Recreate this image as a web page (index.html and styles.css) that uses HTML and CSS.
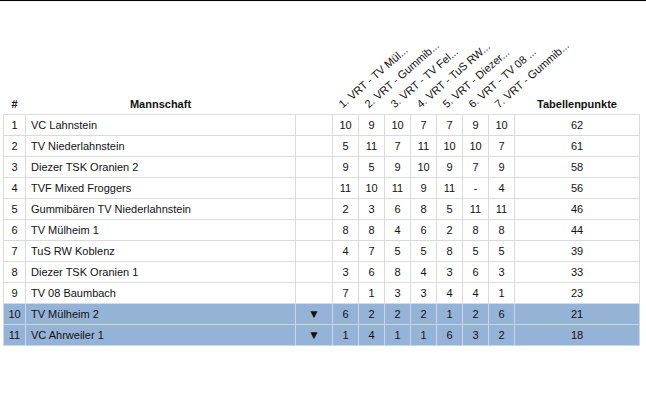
FILE: index.html
```html
<!DOCTYPE html>
<html lang="de">
<head>
<meta charset="utf-8">
<title>Tabelle</title>
<link rel="stylesheet" href="styles.css">
</head>
<body>
<div class="topbar"></div>
<div class="wrap">
<table class="standings">
  <colgroup>
    <col class="c-rank"><col class="c-team"><col class="c-trend">
    <col class="c-sc"><col class="c-sc"><col class="c-sc"><col class="c-sc"><col class="c-sc"><col class="c-sc"><col class="c-sc">
    <col class="c-pts">
  </colgroup>
  <thead>
    <tr>
      <th class="h-plain">#</th>
      <th class="h-plain">Mannschaft</th>
      <th class="h-plain"></th>
      <th class="h-rot"><span class="rot">1. VRT - TV Mül...</span></th>
      <th class="h-rot"><span class="rot">2. VRT - Gummib...</span></th>
      <th class="h-rot"><span class="rot">3. VRT - TV Fel...</span></th>
      <th class="h-rot"><span class="rot">4. VRT - TuS RW...</span></th>
      <th class="h-rot"><span class="rot">5. VRT - Diezer...</span></th>
      <th class="h-rot"><span class="rot">6. VRT - TV 08 ...</span></th>
      <th class="h-rot"><span class="rot">7. VRT - Gummib...</span></th>
      <th class="h-plain">Tabellenpunkte</th>
    </tr>
  </thead>
  <tbody>
    <tr><td class="num">1</td><td class="team">VC Lahnstein</td><td class="trend"></td><td>10</td><td>9</td><td>10</td><td>7</td><td>7</td><td>9</td><td>10</td><td>62</td></tr>
    <tr><td class="num">2</td><td class="team">TV Niederlahnstein</td><td class="trend"></td><td>5</td><td>11</td><td>7</td><td>11</td><td>10</td><td>10</td><td>7</td><td>61</td></tr>
    <tr><td class="num">3</td><td class="team">Diezer TSK Oranien 2</td><td class="trend"></td><td>9</td><td>5</td><td>9</td><td>10</td><td>9</td><td>7</td><td>9</td><td>58</td></tr>
    <tr><td class="num">4</td><td class="team">TVF Mixed Froggers</td><td class="trend"></td><td>11</td><td>10</td><td>11</td><td>9</td><td>11</td><td>-</td><td>4</td><td>56</td></tr>
    <tr><td class="num">5</td><td class="team">Gummibären TV Niederlahnstein</td><td class="trend"></td><td>2</td><td>3</td><td>6</td><td>8</td><td>5</td><td>11</td><td>11</td><td>46</td></tr>
    <tr><td class="num">6</td><td class="team">TV Mülheim 1</td><td class="trend"></td><td>8</td><td>8</td><td>4</td><td>6</td><td>2</td><td>8</td><td>8</td><td>44</td></tr>
    <tr><td class="num">7</td><td class="team">TuS RW Koblenz</td><td class="trend"></td><td>4</td><td>7</td><td>5</td><td>5</td><td>8</td><td>5</td><td>5</td><td>39</td></tr>
    <tr><td class="num">8</td><td class="team">Diezer TSK Oranien 1</td><td class="trend"></td><td>3</td><td>6</td><td>8</td><td>4</td><td>3</td><td>6</td><td>3</td><td>33</td></tr>
    <tr><td class="num">9</td><td class="team">TV 08 Baumbach</td><td class="trend"></td><td>7</td><td>1</td><td>3</td><td>3</td><td>4</td><td>4</td><td>1</td><td>23</td></tr>
    <tr class="down"><td class="num">10</td><td class="team">TV Mülheim 2</td><td class="trend">▼</td><td>6</td><td>2</td><td>2</td><td>2</td><td>1</td><td>2</td><td>6</td><td>21</td></tr>
    <tr class="down"><td class="num">11</td><td class="team">VC Ahrweiler 1</td><td class="trend">▼</td><td>1</td><td>4</td><td>1</td><td>1</td><td>6</td><td>3</td><td>2</td><td>18</td></tr>
  </tbody>
</table>
</div>
</body>
</html>
```

FILE: styles.css
```css
html, body {
  margin: 0;
  padding: 0;
  background: #ffffff;
}
body {
  font-family: "Liberation Sans", Arial, sans-serif;
  font-size: 11px;
  color: #111111;
}
.topbar {
  height: 1px;
  background: #000;
  border-bottom: 1px solid #f2f2f2;
}
.wrap {
  padding: 0 0 0 3px;
}
.standings {
  border-collapse: collapse;
  table-layout: fixed;
  width: 636px;
}
.c-rank { width: 22px; }
.c-team { width: 270px; }
.c-trend { width: 37px; }
.c-sc { width: 26px; }
.c-pts { width: 125px; }

.standings thead th {
  height: 108px;
  padding: 0 0 4px 0;
  vertical-align: bottom;
  font-weight: bold;
  border: none;
  white-space: nowrap;
}
.h-plain { text-align: center; }
.h-rot {
  position: relative;
  text-align: left;
}
.rot {
  position: absolute;
  left: 11px;
  bottom: 4px;
  font-weight: normal;
  transform-origin: 0 100%;
  transform: rotate(-41deg);
  white-space: nowrap;
}
.standings td {
  height: 20px;
  padding: 0;
  border: 1px solid #dadada;
  text-align: center;
  white-space: nowrap;
}
.standings td.team {
  text-align: left;
  padding-left: 5px;
}
.standings td.trend {
  font-size: 12px;
}
.standings tr.down td {
  background: #95b3d7;
  border-color: #c8d7ea;
}
```
